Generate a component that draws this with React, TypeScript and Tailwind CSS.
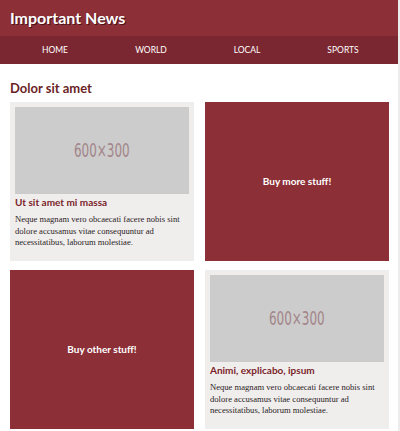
const navItems = ["HOME", "WORLD", "LOCAL", "SPORTS"];

const body =
  "Neque magnam vero obcaecati facere nobis sint dolore accusamus vitae consequuntur ad necessitatibus, laborum molestiae.";

const ImageCard = ({ title }: { title: string }) => (
  <div className="bg-[#f0eeed] p-[5px] h-[159px]">
    <div className="h-[87px] bg-[#cccccc] flex items-center justify-center">
      <span className="text-[19px] text-[#a3868a] font-['DejaVu_Sans_Condensed','Liberation_Sans_Narrow',sans-serif] scale-x-[0.7]">
        600×300
      </span>
    </div>
    <h3 className="mt-[1px] text-[10px] font-bold text-[#7a1f2a] font-['Lato',sans-serif] leading-[14px]">
      {title}
    </h3>
    <p className="mt-[5px] text-[8.6px] leading-[11.5px] text-[#2a1c1e] font-['Liberation_Serif',serif]">
      {body}
    </p>
  </div>
);

const PromoCard = ({ label }: { label: string }) => (
  <div className="bg-[#8c2f37] h-[159px] flex items-center justify-center">
    <span className="text-white text-[10px] font-bold font-['Lato',sans-serif]">{label}</span>
  </div>
);

export default function App() {
  return (
    <div className="w-[400px] h-[431px] bg-white overflow-hidden border-r-2 border-[#ececec] font-['Lato',sans-serif]">
      <header className="bg-[#8c2f37] h-[36px] flex items-center px-[10px] w-[398px]">
        <h1 className="text-white text-[16px] font-bold [text-shadow:1px_1px_0_#4a1219]">
          Important News
        </h1>
      </header>
      <nav className="bg-[#7b2731] h-[28px] grid grid-cols-4 px-[7px] w-[398px]">
        {navItems.map((item) => (
          <div key={item} className="flex items-center justify-center text-white text-[8.5px]">
            {item}
          </div>
        ))}
      </nav>

      <main className="px-[10px]">
        <h2 className="mt-[16px] text-[13px] font-bold text-[#6b1f27] leading-[16px]">Dolor sit amet</h2>

        <div className="mt-[6px] grid grid-cols-2 gap-x-[11px] gap-y-[9px] w-[379px]">
          <ImageCard title="Ut sit amet mi massa" />
          <PromoCard label="Buy more stuff!" />
          <PromoCard label="Buy other stuff!" />
          <ImageCard title="Animi, explicabo, ipsum" />
        </div>
      </main>
    </div>
  );
}
